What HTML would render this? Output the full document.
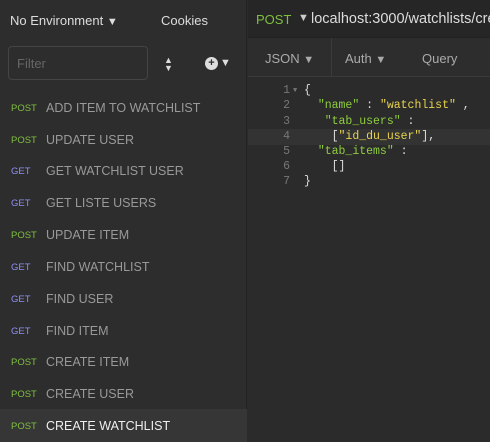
<!DOCTYPE html>
<html><head><style>
*{margin:0;padding:0;box-sizing:border-box}
html,body{overflow:hidden}
body{width:490px;height:442px;background:#2b2b2b;font-family:"Liberation Sans",sans-serif;position:relative}
.side{position:absolute;left:0;top:0;width:247px;height:442px;background:#2d2d2d;border-right:1px solid #222}
.env{position:absolute;left:10px;top:13px;color:#ddd;font-size:13px}
.cook{position:absolute;left:161px;top:13px;color:#ddd;font-size:13px}
.filter{position:absolute;left:8px;top:46px;width:140px;height:34px;border:1px solid #444;border-radius:4px;color:#666;font-size:13px;padding:9px 8px}
.row{position:absolute;left:0;width:247px;height:32px;font-size:12.5px;color:#999}
.row .m{position:absolute;left:11px;top:12px;font-size:9.5px}
.row .n{position:absolute;left:46px;top:10px}
.p{color:#7fbf3f}.g{color:#8e8ef5}
.sel{background:#363636}.sel .n{color:#eee}
.top{position:absolute;left:248px;top:0;width:242px;height:38px;background:#262626;border-bottom:1px solid #222;overflow:hidden}
.tabs{position:absolute;left:248px;top:38px;width:242px;height:39px;background:#2d2d2d;border-bottom:1px solid #3a3a3a;overflow:hidden}
.t{position:absolute;top:13px;color:#aaa;font-size:13px}
.tri{font-size:11px}
.code{position:absolute;left:248px;top:80px;width:242px;height:360px;overflow:hidden;font-family:"Liberation Mono",monospace;font-size:11.5px}
.l{position:absolute;left:0;width:242px;height:16px;line-height:16px}
.ln{position:absolute;left:30px;color:#777;width:12px;text-align:right}
.c{position:absolute;left:56px;color:#ddd;white-space:pre}
.k{color:#8fce3f}.s{color:#e8d44d}
</style></head><body>
<div class="side">
<div class="env">No Environment <span class="tri">▼</span></div>
<div class="cook">Cookies</div>
<div class="filter">Filter</div>
<div style="position:absolute;left:164px;top:56px;color:#ddd;font-size:9px;line-height:8px">▲<br>▼</div>
<div style="position:absolute;left:205px;top:57px;width:13px;height:13px;border-radius:7px;background:#ddd;color:#2d2d2d;font-size:11px;line-height:13px;text-align:center;font-weight:bold">+</div>
<div style="position:absolute;left:220px;top:57px;color:#ddd;font-size:11px">▼</div>
<div class="row" style="top:91px"><span class="m p">POST</span><span class="n">ADD ITEM TO WATCHLIST</span></div>
<div class="row" style="top:123px"><span class="m p">POST</span><span class="n">UPDATE USER</span></div>
<div class="row" style="top:154px"><span class="m g">GET</span><span class="n">GET WATCHLIST USER</span></div>
<div class="row" style="top:186px"><span class="m g">GET</span><span class="n">GET LISTE USERS</span></div>
<div class="row" style="top:218px"><span class="m p">POST</span><span class="n">UPDATE ITEM</span></div>
<div class="row" style="top:250px"><span class="m g">GET</span><span class="n">FIND WATCHLIST</span></div>
<div class="row" style="top:282px"><span class="m g">GET</span><span class="n">FIND USER</span></div>
<div class="row" style="top:314px"><span class="m g">GET</span><span class="n">FIND ITEM</span></div>
<div class="row" style="top:345px"><span class="m p">POST</span><span class="n">CREATE ITEM</span></div>
<div class="row" style="top:377px"><span class="m p">POST</span><span class="n">CREATE USER</span></div>
<div class="row sel" style="top:409px;height:33px"><span class="m p">POST</span><span class="n">CREATE WATCHLIST</span></div>
</div>
<div class="top">
<span style="position:absolute;left:8px;top:12px;color:#7fbf3f;font-size:13px">POST</span>
<span style="position:absolute;left:50px;top:12px;color:#ccc;font-size:11px">▼</span>
<span style="position:absolute;left:63px;top:11px;color:#ddd;font-size:14.5px;white-space:nowrap">localhost:3000/watchlists/create</span>
</div>
<div class="tabs">
<div style="position:absolute;left:83px;top:0;width:1px;height:39px;background:#3a3a3a"></div>
<span class="t" style="left:17px">JSON <span class="tri">▼</span></span>
<span class="t" style="left:97px">Auth <span class="tri">▼</span></span>
<span class="t" style="left:174px">Query</span>
</div>
<div class="code">
<div class="l" style="top:3px"><span class="ln">1</span><span style="position:absolute;left:45px;color:#777;font-size:7px">▼</span><span class="c">{</span></div>
<div class="l" style="top:18px"><span class="ln">2</span><span class="c">  <span class="k">"name"</span> : <span class="s">"watchlist"</span> ,</span></div>
<div class="l" style="top:34px"><span class="ln">3</span><span class="c">   <span class="k">"tab_users"</span> :</span></div>
<div class="l" style="top:49px;background:#333"><span class="ln">4</span><span class="c">    [<span class="s">"id_du_user"</span>],</span></div>
<div class="l" style="top:64px"><span class="ln">5</span><span class="c">  <span class="k">"tab_items"</span> :</span></div>
<div class="l" style="top:79px"><span class="ln">6</span><span class="c">    []</span></div>
<div class="l" style="top:94px"><span class="ln">7</span><span class="c">}</span></div>
</div>
</body></html>
